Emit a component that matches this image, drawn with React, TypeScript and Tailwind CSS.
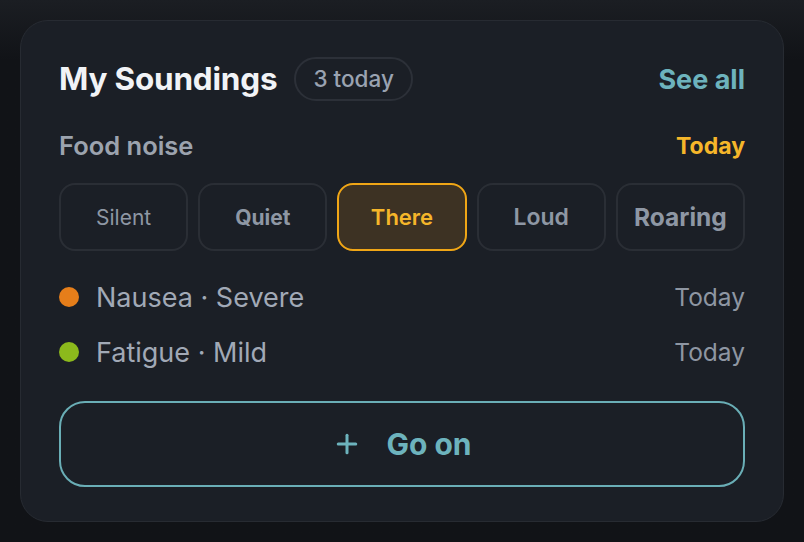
import { Plus } from "lucide-react";

const levels = [
  { label: "Silent", cls: "text-[21px] font-normal" },
  { label: "Quiet", cls: "text-[21px] font-bold" },
  { label: "There", cls: "text-[22px] font-semibold", active: true },
  { label: "Loud", cls: "text-[23px] font-semibold" },
  { label: "Roaring", cls: "text-[24.5px] font-bold" },
];

const entries = [
  { name: "Nausea · Severe", dot: "bg-[#e67e1a]", when: "Today" },
  { name: "Fatigue · Mild", dot: "bg-[#8cb91c]", when: "Today" },
];

export default function App() {
  return (
    <div className="min-h-screen bg-[#111317] bg-gradient-to-b from-[#1b1e23] to-[#111317] to-[60px] p-5 font-['Inter',sans-serif] leading-none">
      <div className="flex h-[502px] w-[764px] flex-col rounded-[28px] border border-[#272b32] bg-[#1b1f26] px-[38px] pt-[36px]">
        <div className="flex h-[44px] items-center justify-between">
          <div className="flex items-center gap-[17px]">
            <h1 className="text-[31.5px] font-bold leading-none tracking-[-0.2px] text-[#f1f3f6]">My Soundings</h1>
            <span className="flex h-[44px] items-center rounded-full border-2 border-[#2c3038] px-[17px] text-[22.5px] font-medium leading-none text-[#9aa3b1]">
              3 today
            </span>
          </div>
          <button className="text-[27px] font-bold leading-none text-[#6db3bd]">See all</button>
        </div>

        <div className="mt-[30px] flex h-[30px] items-center justify-between">
          <span className="text-[25.5px] font-semibold leading-none text-[#9ca3ae]">Food noise</span>
          <span className="text-[23px] font-bold leading-none text-[#f5b62a]">Today</span>
        </div>

        <div className="mt-[22px] grid grid-cols-5 gap-[10px]">
          {levels.map((l) => (
            <button
              key={l.label}
              className={`flex h-[68px] items-center justify-center rounded-[16px] border-2 leading-none ${
                l.active ? "border-[#f0a616] bg-[#3d3223] text-[#f5b62a]" : "border-[#2a2e35] text-[#8e97a4]"
              } ${l.cls}`}
            >
              {l.label}
            </button>
          ))}
        </div>

        <div className="mt-[34px] flex flex-col gap-[31px]">
          {entries.map((e) => (
            <div key={e.name} className="flex h-[24px] items-center justify-between">
              <div className="flex items-center gap-[17px]">
                <span className={`h-[20px] w-[20px] rounded-full ${e.dot}`} />
                <span className="text-[27px] leading-none text-[#a1a9b6]">{e.name}</span>
              </div>
              <span className="text-[24.5px] leading-none text-[#8e96a2]">{e.when}</span>
            </div>
          ))}
        </div>

        <button className="mt-[37px] flex h-[86px] items-center justify-center gap-[24px] rounded-[26px] border-2 border-[#6aaeb6] text-[30px] font-bold leading-none text-[#6db3bd]">
          <Plus className="h-[30px] w-[30px]" strokeWidth={2.4} />
          Go on
        </button>
      </div>
    </div>
  );
}
